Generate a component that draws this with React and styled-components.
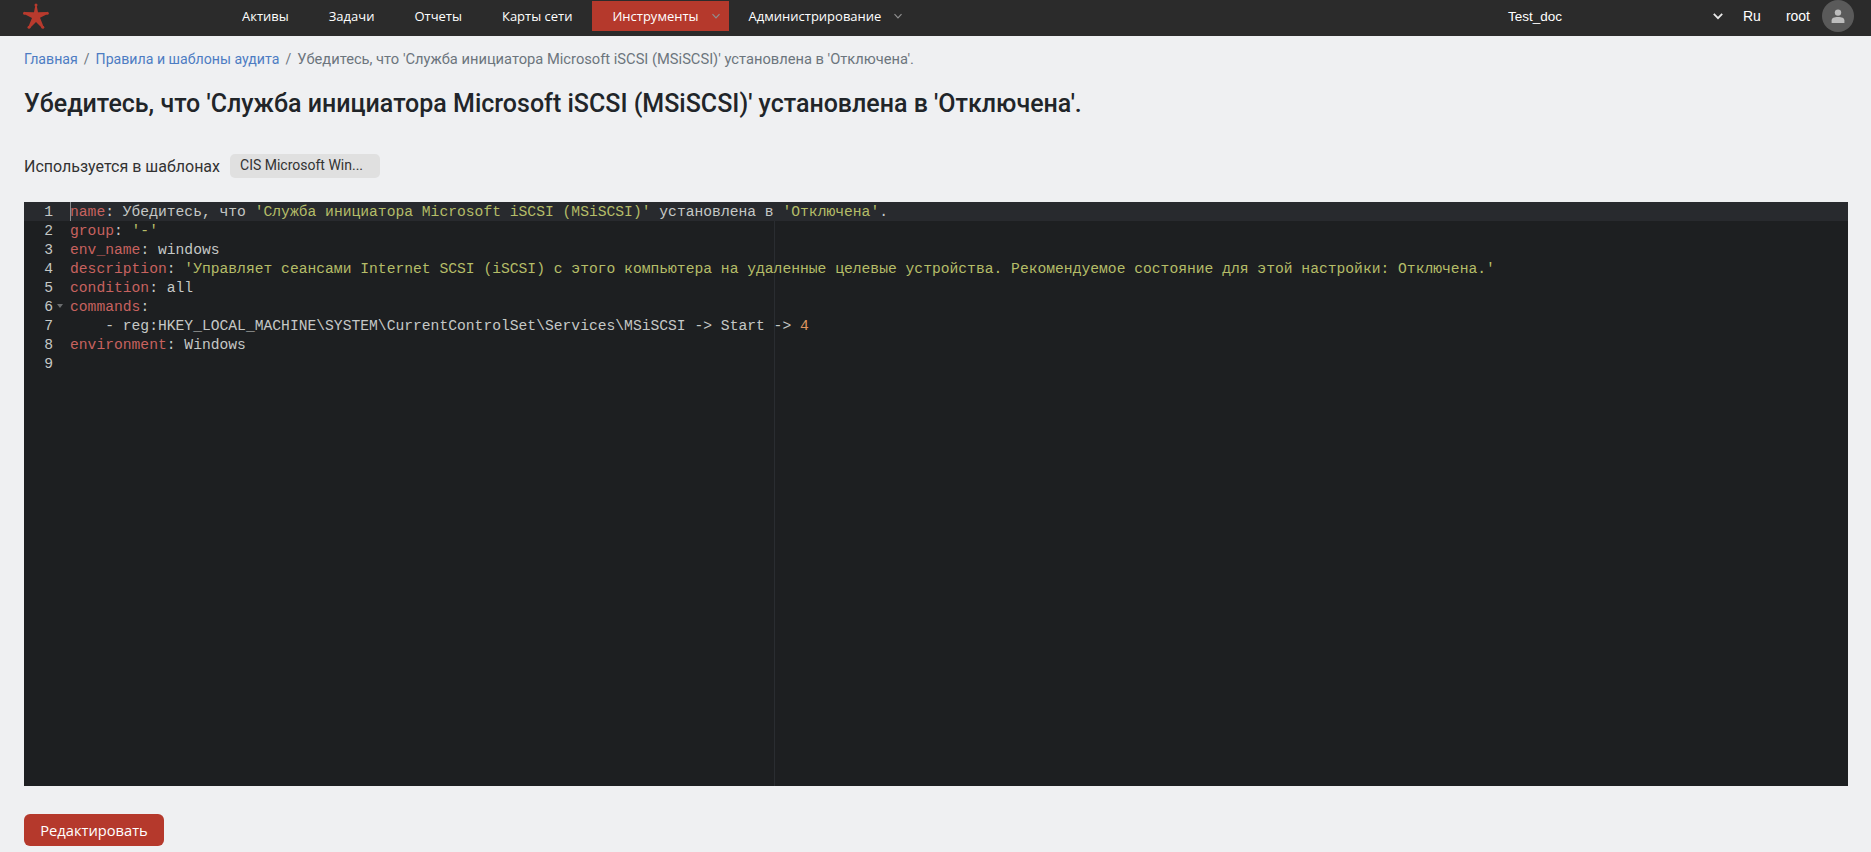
import React from "react";
import styled, { createGlobalStyle } from "styled-components";

const GlobalStyle = createGlobalStyle`
    html, body {
        margin: 0;
        padding: 0;
        height: 100%;
        background: #eff0f2;
        overflow: hidden;
    }
`;

const Page = styled.div`
    height: 852px;
    display: flex;
    flex-direction: column;
    background: #eff0f2;
    font-family: Roboto, "Liberation Sans", sans-serif;
`;

const Header = styled.header`
    height: 36px;
    flex-shrink: 0;
    display: flex;
    align-items: flex-start;
    background: #2b2b2b;
    color: #fff;
`;

const Brand = styled.div`
    width: 222px;
    height: 36px;
    padding: 3px 0 0 23px;
    box-sizing: border-box;
`;

const Nav = styled.nav`
    display: flex;
    flex: 1;
    font-family: "Open Sans", "Noto Sans", sans-serif;
    font-size: 13px;
`;

const NavItem = styled.div`
    height: 30px;
    margin-top: 1px;
    padding: 0 ${(p) => (p.$hasMenu ? "8px" : "20px")} 0 20px;
    display: flex;
    align-items: center;
    gap: 12px;
    white-space: nowrap;
    background: ${(p) => (p.$active ? "#b5392c" : "transparent")};
`;

const ProjectSelect = styled.div`
    width: 218px;
    height: 32px;
    display: flex;
    align-items: center;
    justify-content: space-between;
    box-sizing: border-box;
    padding-right: 2px;
    font-family: "Liberation Sans", Arial, sans-serif;
    font-size: 13.5px;
`;

const Lang = styled.div`
    margin-left: 17px;
    line-height: 32px;
    font-family: "Liberation Sans", Arial, sans-serif;
    font-size: 14px;
`;

const UserName = styled(Lang)`
    margin-left: 25px;
`;

const Avatar = styled.div`
    width: 32px;
    height: 32px;
    margin: 0 17px 0 12px;
    border-radius: 50%;
    background: #5a5a5a;
    display: flex;
    align-items: center;
    justify-content: center;
`;

const Main = styled.main`
    flex: 1;
    display: flex;
    flex-direction: column;
    align-items: flex-start;
    padding: 0 23px 0 24px;
`;

const Breadcrumbs = styled.div`
    margin-top: 15px;
    height: 17px;
    line-height: 17px;
    font-size: 14px;
    color: #6c757d;
    display: flex;
    gap: 6px;
    white-space: nowrap;
`;

const Crumb = styled.a`
    color: #4d7cc3;
    font-size: 14.15px;
`;

const Sep = styled.span`
    color: #6c757d;
`;

const CurrentCrumb = styled.span`
    font-size: 14.7px;
`;

const Title = styled.h1`
    margin: 20px 0 0;
    height: 32px;
    line-height: 32px;
    font-size: 25px;
    font-weight: 500;
    color: #212529;
    white-space: nowrap;
`;

const TemplatesRow = styled.div`
    margin-top: 34px;
    height: 24px;
    display: flex;
    align-items: center;
    gap: 10px;
    font-size: 16px;
    color: #333;
`;

const Tag = styled.span`
    width: 150px;
    height: 24px;
    line-height: 23px;
    box-sizing: border-box;
    padding-left: 10px;
    border-radius: 5px;
    background: #e0e0e0;
    font-size: 14px;
    color: #333;
`;

const Editor = styled.div`
    position: relative;
    margin-top: 24px;
    align-self: stretch;
    height: 584px;
    display: flex;
    background: #1d1f21;
    font-family: "Liberation Mono", monospace;
    font-size: 14.67px;
    line-height: 21px;
    color: #c5c8c6;
    overflow: hidden;
`;

const PrintMargin = styled.div`
    position: absolute;
    left: 750px;
    top: 19px;
    bottom: 0;
    width: 1px;
    background: #2a2d31;
`;

const Gutter = styled.div`
    width: 46px;
    flex-shrink: 0;
    text-align: right;
`;

const GutterCell = styled.div`
    position: relative;
    height: 19px;
    padding-right: 17px;
    background: ${(p) => (p.$active ? "#282a2e" : "transparent")};
`;

const FoldMark = styled.span`
    position: absolute;
    left: 33px;
    top: 7px;
    border-left: 3px solid transparent;
    border-right: 3px solid transparent;
    border-top: 4px solid #6b6d6f;
`;

const Code = styled.div`
    flex: 1;
    min-width: 0;
`;

const CodeLine = styled.div`
    position: relative;
    height: 19px;
    white-space: pre;
    background: ${(p) => (p.$active ? "#282a2e" : "transparent")};
`;

const Cursor = styled.span`
    position: absolute;
    left: 0;
    top: 0;
    bottom: 0;
    width: 1px;
    background: #8a8c8e;
`;

const Key = styled.span`
    color: #c7625f;
`;

const Punct = styled.span`
    color: #c5c8c6;
`;

const Str = styled.span`
    color: #b5bd68;
`;

const Num = styled.span`
    color: #de935f;
`;

const EditButton = styled.button`
    margin-top: 28px;
    width: 140px;
    height: 32px;
    border: 0;
    border-radius: 6px;
    background: #b5392c;
    color: #fff;
    font-family: "Open Sans", "Noto Sans", sans-serif;
    font-size: 14.7px;
    padding: 0;
`;

const Chevron = ({ size = 10, color = "#8f8f8f", width = 1.2 }) => (
    <svg width={size} height={size} viewBox="0 0 10 10" fill="none">
        <path d="M1.5 3.2 L5 6.8 L8.5 3.2" stroke={color} strokeWidth={width} />
    </svg>
);

const Star = () => (
    <svg width="26" height="26" viewBox="0 0 26 26" fill="#b83a2d">
        <polygon points="12.4,2 13.6,2 15,9.3 24.3,9 24.5,11 17,14.8 20.6,23.8 19,25 13,19 7,25 5.4,23.8 9,15 1.2,11 1.4,9 11,9.3" />
        <circle cx="13" cy="1.9" r="1.5" />
        <circle cx="1.5" cy="10.3" r="1.5" />
        <circle cx="24.3" cy="10.3" r="1.5" />
        <circle cx="6" cy="24.2" r="1.5" />
        <circle cx="19.8" cy="24.2" r="1.5" />
    </svg>
);

const UserIcon = () => (
    <svg width="14" height="14" viewBox="0 0 14 14" fill="#bdbdbd">
        <circle cx="7" cy="3.6" r="3.2" />
        <path d="M.6 14 V11.4 C.6 9 3 7.9 7 7.9 C11 7.9 13.4 9 13.4 11.4 V14 Z" />
    </svg>
);

const navItems = [
    { label: "Активы" },
    { label: "Задачи" },
    { label: "Отчеты" },
    { label: "Карты сети" },
    { label: "Инструменты", chevron: true, active: true },
    { label: "Администрирование", chevron: true },
];

const codeLines = [
    <><Key>name</Key><Punct>:</Punct> Убедитесь, что <Str>'Служба инициатора Microsoft iSCSI (MSiSCSI)'</Str> установлена в <Str>'Отключена'</Str>.</>,
    <><Key>group</Key><Punct>:</Punct> <Str>'-'</Str></>,
    <><Key>env_name</Key><Punct>:</Punct> windows</>,
    <><Key>description</Key><Punct>:</Punct> <Str>'Управляет сеансами Internet SCSI (iSCSI) с этого компьютера на удаленные целевые устройства. Рекомендуемое состояние для этой настройки: Отключена.'</Str></>,
    <><Key>condition</Key><Punct>:</Punct> all</>,
    <><Key>commands</Key><Punct>:</Punct></>,
    <>{"    "}- reg:HKEY_LOCAL_MACHINE\SYSTEM\CurrentControlSet\Services\MSiSCSI -&gt; Start -&gt; <Num>4</Num></>,
    <><Key>environment</Key><Punct>:</Punct> Windows</>,
    <></>,
];

const App = () => {
    return (
        <Page>
            <GlobalStyle />
            <Header>
                <Brand><Star /></Brand>
                <Nav>
                    {navItems.map((item) => (
                        <NavItem key={item.label} $active={item.active} $hasMenu={item.chevron}>
                            {item.label}
                            {item.chevron && <Chevron />}
                        </NavItem>
                    ))}
                </Nav>
                <ProjectSelect>
                    Test_doc
                    <Chevron size={12} color="#e8e8e8" width={1.5} />
                </ProjectSelect>
                <Lang>Ru</Lang>
                <UserName>root</UserName>
                <Avatar><UserIcon /></Avatar>
            </Header>

            <Main>
                <Breadcrumbs>
                    <Crumb>Главная</Crumb>
                    <Sep>/</Sep>
                    <Crumb>Правила и шаблоны аудита</Crumb>
                    <Sep>/</Sep>
                    <CurrentCrumb>Убедитесь, что 'Служба инициатора Microsoft iSCSI (MSiSCSI)' установлена в 'Отключена'.</CurrentCrumb>
                </Breadcrumbs>
                <Title>Убедитесь, что 'Служба инициатора Microsoft iSCSI (MSiSCSI)' установлена в 'Отключена'.</Title>
                <TemplatesRow>
                    Используется в шаблонах
                    <Tag>CIS Microsoft Win...</Tag>
                </TemplatesRow>

                <Editor>
                    <PrintMargin />
                    <Gutter>
                        {codeLines.map((_, i) => (
                            <GutterCell key={i} $active={i === 0}>
                                {i + 1}
                                {i === 5 && <FoldMark />}
                            </GutterCell>
                        ))}
                    </Gutter>
                    <Code>
                        {codeLines.map((line, i) => (
                            <CodeLine key={i} $active={i === 0}>
                                {i === 0 && <Cursor />}
                                {line}
                            </CodeLine>
                        ))}
                    </Code>
                </Editor>

                <EditButton>Редактировать</EditButton>
            </Main>
        </Page>
    );
};

export default App;
